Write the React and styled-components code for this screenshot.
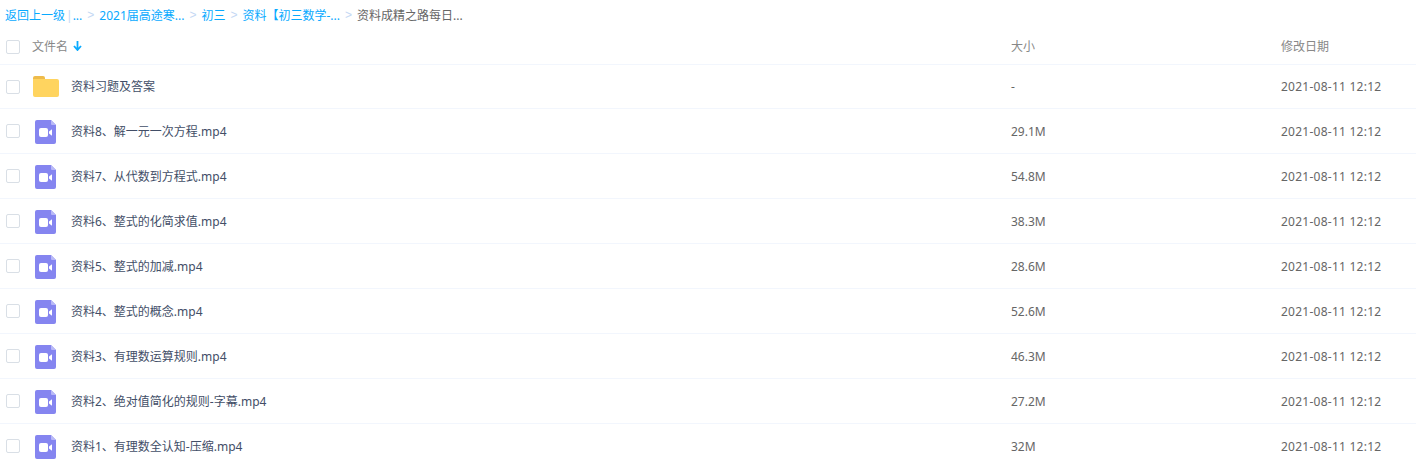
import React from "react"
import styled, { createGlobalStyle } from "styled-components"

const GlobalStyle = createGlobalStyle`
html, body {
    margin: 0;
    padding: 0;
    background: #fff;
    overflow: hidden;
    font-family: "Noto Sans", "Noto Sans CJK SC", sans-serif;
    font-size: 12px;
}
`

const Page = styled.div`
width: 1416px;
height: 466px;
overflow: hidden;
`

const Breadcrumb = styled.div`
height: 30px;
padding-left: 5px;
display: flex;
align-items: center;
white-space: pre;
color: #666;
`

const CrumbLink = styled.span`
color: #09aaff;
`

const Divider = styled.span`
color: #c4d8f4;
margin-left: 1px;
`

const Arrow = styled.span`
color: #c4d8f4;
margin: 0 5px;
font-family: "Liberation Sans", sans-serif;
`

const Row = styled.div`
display: grid;
grid-template-columns: 1011px 270px 1fr;
align-items: center;
height: ${props => props.$height}px;
border-bottom: 1px solid #f2f6fd;
box-sizing: border-box;
color: #666;
`

const NameCell = styled.div`
display: flex;
align-items: center;
padding-left: 6px;
`

const Check = styled.span`
width: 12px;
height: 12px;
border: 1px solid #d9dfe6;
border-radius: 2px;
flex: none;
`

const HeaderLabel = styled.span`
color: #888;
margin: 0 0 2px 12px;
display: flex;
align-items: center;
gap: 5px;
`

const IconBox = styled.span`
width: 26px;
height: 26px;
margin-left: 13px;
flex: none;
display: flex;
align-items: center;
justify-content: center;
`

const FileName = styled.span`
margin-left: 12px;
margin-bottom: ${props => (props.$raised ? "2px" : "0")};
color: #424e67;
`

const SizeCell = styled.span`
color: #666;
`

const DateCell = styled.span`
color: #666;
letter-spacing: 0.25px;
`

const HeaderCell = styled.span`
color: #888;
margin-bottom: 2px;
`

const VideoSvg = styled.svg`
margin: 2px 2px 0 0;
`

const FolderIcon = () => (
    <svg width="26" height="21" viewBox="0 0 26 21">
        <path d="M0 2a2 2 0 0 1 2-2h8a2 2 0 0 1 2 2v2H0z" fill="#eebb4b" />
        <path d="M0 3h24a2 2 0 0 1 2 2v14a2 2 0 0 1-2 2H2a2 2 0 0 1-2-2z" fill="#ffd45f" />
    </svg>
)

const VideoIcon = () => (
    <VideoSvg width="21" height="24" viewBox="0 0 21 24">
        <path d="M2 0h14l5 5v17a2 2 0 0 1-2 2H2a2 2 0 0 1-2-2V2a2 2 0 0 1 2-2z" fill="#8585f0" />
        <path d="M16 0l5 5h-4a1 1 0 0 1-1-1z" fill="#b9b9f7" />
        <rect x="4" y="8" width="9" height="9" rx="2" fill="#fff" />
        <path d="M14 11.5l3-2.2v6.4l-3-2.2z" fill="#fff" />
    </VideoSvg>
)

const files = [
    { name: "资料8、解一元一次方程.mp4", size: "29.1M" },
    { name: "资料7、从代数到方程式.mp4", size: "54.8M" },
    { name: "资料6、整式的化简求值.mp4", size: "38.3M" },
    { name: "资料5、整式的加减.mp4", size: "28.6M" },
    { name: "资料4、整式的概念.mp4", size: "52.6M" },
    { name: "资料3、有理数运算规则.mp4", size: "46.3M" },
    { name: "资料2、绝对值简化的规则-字幕.mp4", size: "27.2M" },
    { name: "资料1、有理数全认知-压缩.mp4", size: "32M" },
]

const DATE = "2021-08-11 12:12"

const App = () => {
    return (
        <Page>
            <GlobalStyle />
            <Breadcrumb>
                <CrumbLink>返回上一级</CrumbLink>
                <Divider>|</Divider>
                <CrumbLink>...</CrumbLink>
                <Arrow>&gt;</Arrow>
                <CrumbLink>2021届高途寒...</CrumbLink>
                <Arrow>&gt;</Arrow>
                <CrumbLink>初三</CrumbLink>
                <Arrow>&gt;</Arrow>
                <CrumbLink>资料【初三数学-...</CrumbLink>
                <Arrow>&gt;</Arrow>
                <span>资料成精之路每日...</span>
            </Breadcrumb>
            <Row $height={35}>
                <NameCell>
                    <Check />
                    <HeaderLabel>
                        文件名
                        <svg width="9" height="10" viewBox="0 0 9 10">
                            <path d="M4.5 0v8M1 5l3.5 4L8 5" fill="none" stroke="#09aaff" strokeWidth="1.8" />
                        </svg>
                    </HeaderLabel>
                </NameCell>
                <HeaderCell>大小</HeaderCell>
                <HeaderCell>修改日期</HeaderCell>
            </Row>
            <Row $height={44}>
                <NameCell>
                    <Check />
                    <IconBox><FolderIcon /></IconBox>
                    <FileName $raised>资料习题及答案</FileName>
                </NameCell>
                <SizeCell>-</SizeCell>
                <DateCell>{DATE}</DateCell>
            </Row>
            {files.map(file => (
                <Row $height={45} key={file.name}>
                    <NameCell>
                        <Check />
                        <IconBox><VideoIcon /></IconBox>
                        <FileName>{file.name}</FileName>
                    </NameCell>
                    <SizeCell>{file.size}</SizeCell>
                    <DateCell>{DATE}</DateCell>
                </Row>
            ))}
        </Page>
    )
}

export default App
